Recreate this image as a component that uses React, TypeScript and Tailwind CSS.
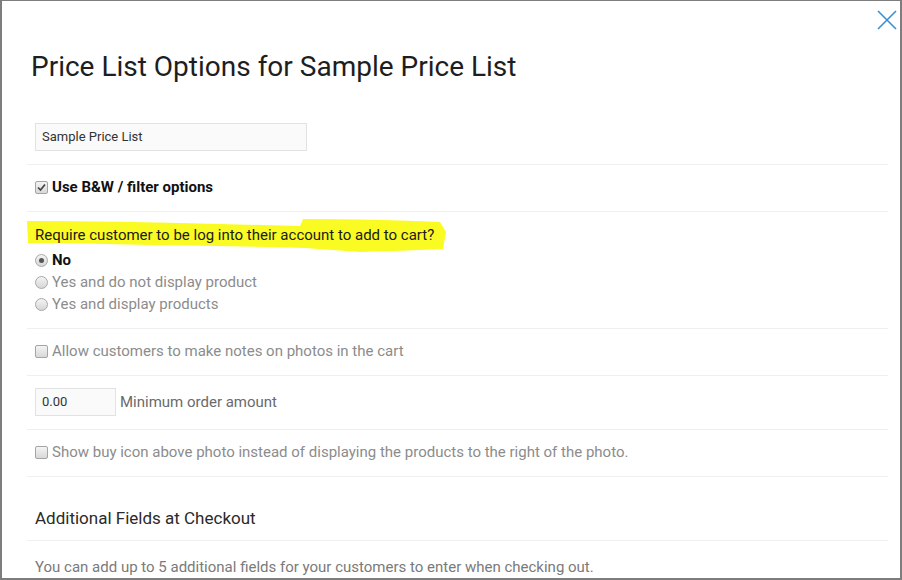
import React from 'react';

const CheckBox = ({ checked = false }: { checked?: boolean }) => (
  <span className="relative inline-block w-[13px] h-[13px] shrink-0 rounded-[2px] border border-[#a5a5a5] bg-gradient-to-b from-[#f4f4f4] to-[#d8d8d8]">
    {checked && (
      <svg className="absolute left-[1px] top-[1px]" width="9" height="9" viewBox="0 0 9 9">
        <path d="M1 4.5 L3.5 7 L8 1.5" fill="none" stroke="#444" strokeWidth="1.7" />
      </svg>
    )}
  </span>
);

const Radio = ({ checked = false }: { checked?: boolean }) => (
  <span className="flex items-center justify-center w-[13px] h-[13px] shrink-0 rounded-full border border-[#a8a8a8] bg-gradient-to-b from-[#f4f4f4] to-[#d6d6d6]">
    {checked && <span className="w-[5px] h-[5px] rounded-full bg-[#555]" />}
  </span>
);

const Row = ({ className = '', children }: { className?: string; children: React.ReactNode }) => (
  <div className={`border-b border-[#efefef] px-2 ${className}`}>{children}</div>
);

const App = () => {
  const radios = [
    { label: 'No', checked: true },
    { label: 'Yes and do not display product', checked: false },
    { label: 'Yes and display products', checked: false },
  ];

  return (
    <div
      className="relative w-[902px] h-[580px] overflow-hidden bg-white border-l-2 border-t border-r-2 border-b-2 border-[#7d7d7d]"
      style={{ fontFamily: 'Roboto, "Liberation Sans", sans-serif' }}
    >
      <svg className="absolute right-[3px] top-[9px]" width="20" height="20" viewBox="0 0 20 20">
        <path d="M1 1 L19 19 M19 1 L1 19" stroke="#3a8fd2" strokeWidth="1.6" fill="none" />
      </svg>

      <div className="pl-[25px] pr-[12px]">
        <h1 className="mt-[49px] pl-1 text-[28px] leading-[33px] text-[#1e1e1e] font-normal">
          Price List Options for Sample Price List
        </h1>

        <Row className="pt-[40px] pb-[13px]">
          <div className="w-[272px] h-[28px] border border-[#e2e2e2] bg-[#fafafa] px-[6px] flex items-center text-[13px] text-[#333]">
            Sample Price List
          </div>
        </Row>

        <Row className="pt-[12px] pb-[14px]">
          <div className="flex items-center gap-[4px] h-[20px]">
            <CheckBox checked />
            <span className="text-[15px] font-bold text-[#111]">Use B&amp;W / filter options</span>
          </div>
        </Row>

        <Row className="relative pt-[13px] pb-[13px]">
          <svg className="absolute left-0 top-0" width="440" height="50" viewBox="0 0 440 50">
            <path
              d="M0 9 Q90 9 193 12 L273 14 L276 7 Q350 7 413 10 L419 20 L416 37 Q373 39 333 40 L278 36 Q200 34 123 33 L33 31 L1 31 Z"
              fill="#fbfb24"
            />
          </svg>
          <div className="relative h-[20px] flex items-center text-[15px] text-[#1a1a1a]">
            Require customer to be log into their account to add to cart?
          </div>
          <div className="flex flex-col mt-[4px]">
            {radios.map((r, i) => (
              <div key={i} className="flex items-center gap-[4px] h-[22px]">
                <Radio checked={r.checked} />
                <span
                  className={
                    r.checked ? 'text-[15px] font-bold text-[#111]' : 'text-[15px] text-[#8c8c8c]'
                  }
                >
                  {r.label}
                </span>
              </div>
            ))}
          </div>
        </Row>

        <Row className="pt-[12px] pb-[14px]">
          <div className="flex items-center gap-[4px] h-[20px]">
            <CheckBox />
            <span className="text-[15px] text-[#8c8c8c]">Allow customers to make notes on photos in the cart</span>
          </div>
        </Row>

        <Row className="pt-[12px] pb-[13px]">
          <div className="flex items-center gap-[4px]">
            <div className="w-[81px] h-[28px] border border-[#e2e2e2] bg-[#fafafa] px-[6px] flex items-center text-[13px] text-[#333]">
              0.00
            </div>
            <span className="text-[15px] text-[#6a6a6a]">Minimum order amount</span>
          </div>
        </Row>

        <Row className="pt-[12px] pb-[14px]">
          <div className="flex items-center gap-[4px] h-[20px]">
            <CheckBox />
            <span className="text-[15px] text-[#8c8c8c]">
              Show buy icon above photo instead of displaying the products to the right of the photo.
            </span>
          </div>
        </Row>

        <Row className="pt-[30px] pb-[9px]">
          <h2 className="h-[24px] flex items-center text-[17px] text-[#2a2a2a] font-normal">
            Additional Fields at Checkout
          </h2>
        </Row>

        <div className="px-2 pt-[16px]">
          <p className="h-[20px] flex items-center text-[15px] text-[#7a7a7a]">
            You can add up to 5 additional fields for your customers to enter when checking out.
          </p>
        </div>
      </div>
    </div>
  );
};

export default App;
